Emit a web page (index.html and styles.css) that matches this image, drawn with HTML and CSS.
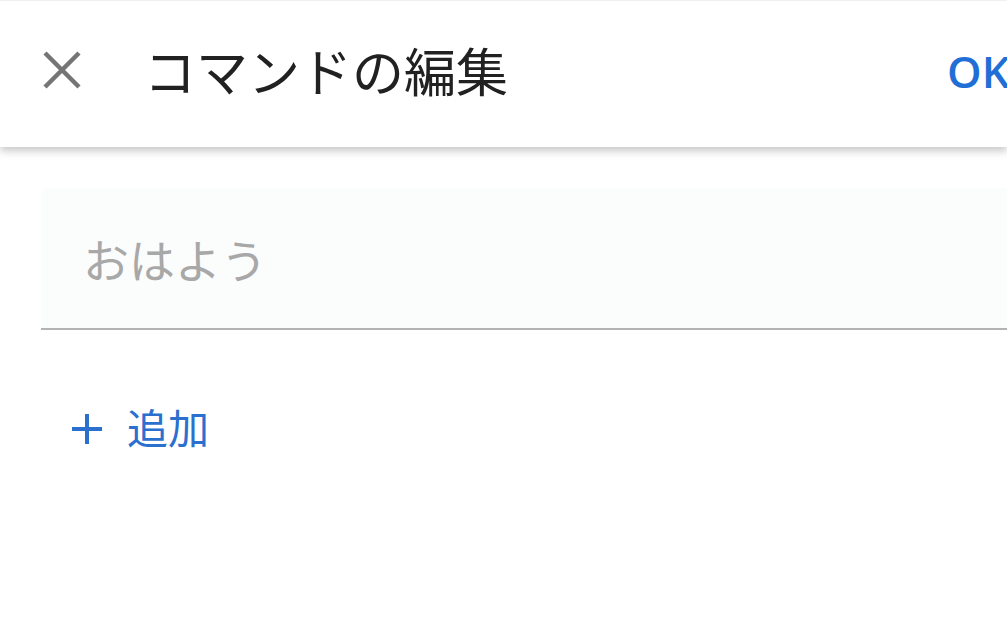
FILE: index.html
```html
<!DOCTYPE html>
<html lang="ja">
<head>
<meta charset="utf-8">
<link rel="stylesheet" href="styles.css">
</head>
<body>
<header class="appbar">
  <svg class="close" width="40" height="40" viewBox="0 0 40 40"><path d="M3 3 L37 37 M37 3 L3 37" stroke="#757575" stroke-width="4.5" fill="none"/></svg>
  <h1 class="title">コマンドの編集</h1>
  <span class="ok">OK</span>
</header>
<main class="content">
  <div class="field">
    <span class="placeholder">おはよう</span>
  </div>
  <div class="add">
    <svg class="plus" width="32" height="32" viewBox="0 0 32 32"><path d="M16 1 V31 M1 16 H31" stroke="#2b6fcf" stroke-width="4" fill="none"/></svg>
    <span class="add-label">追加</span>
  </div>
</main>
</body>
</html>
```
FILE: styles.css
```css
html, body {
  margin: 0;
  padding: 0;
  background: #ffffff;
  overflow: hidden;
  width: 1007px;
  height: 625px;
  font-family: "Noto Sans CJK JP", "Noto Sans", sans-serif;
}
.appbar {
  height: 147px;
  box-sizing: border-box;
  border-top: 1px solid #f0f0f0;
  display: flex;
  align-items: center;
  padding-left: 42px;
  background: #fff;
  box-shadow: 0 4px 8px rgba(0,0,0,0.22);
  position: relative;
  white-space: nowrap;
}
.close {
  flex: none;
  margin-top: -8px;
}
.title {
  margin: 0 0 0 62px;
  font-size: 52px;
  font-weight: 400;
  color: #212121;
  line-height: 1;
  margin-top: -8px;
  flex: none;
  width: 803px;
}
.ok {
  font-family: "Open Sans", "Roboto", sans-serif;
  font-weight: 600;
  font-size: 44px;
  color: #1f6fd6;
  margin-top: -6px;
  flex: none;
}
.content {
  padding-left: 41px;
  padding-top: 41px;
}
.field {
  height: 142px;
  box-sizing: border-box;
  background: #fbfcfc;
  border-bottom: 2px solid #b3b3b3;
  border-top-left-radius: 8px;
  display: flex;
  align-items: center;
  padding-left: 42px;
}
.placeholder {
  font-size: 46px;
  color: #a8a8a8;
  line-height: 1;
  margin-top: 0;
}
.add {
  display: flex;
  align-items: center;
  margin-top: 80px;
  padding-left: 30px;
  gap: 24px;
}
.plus {
  flex: none;
}
.add-label {
  font-size: 41px;
  color: #2b6fcf;
  line-height: 1;
  margin-top: -4px;
}
```
